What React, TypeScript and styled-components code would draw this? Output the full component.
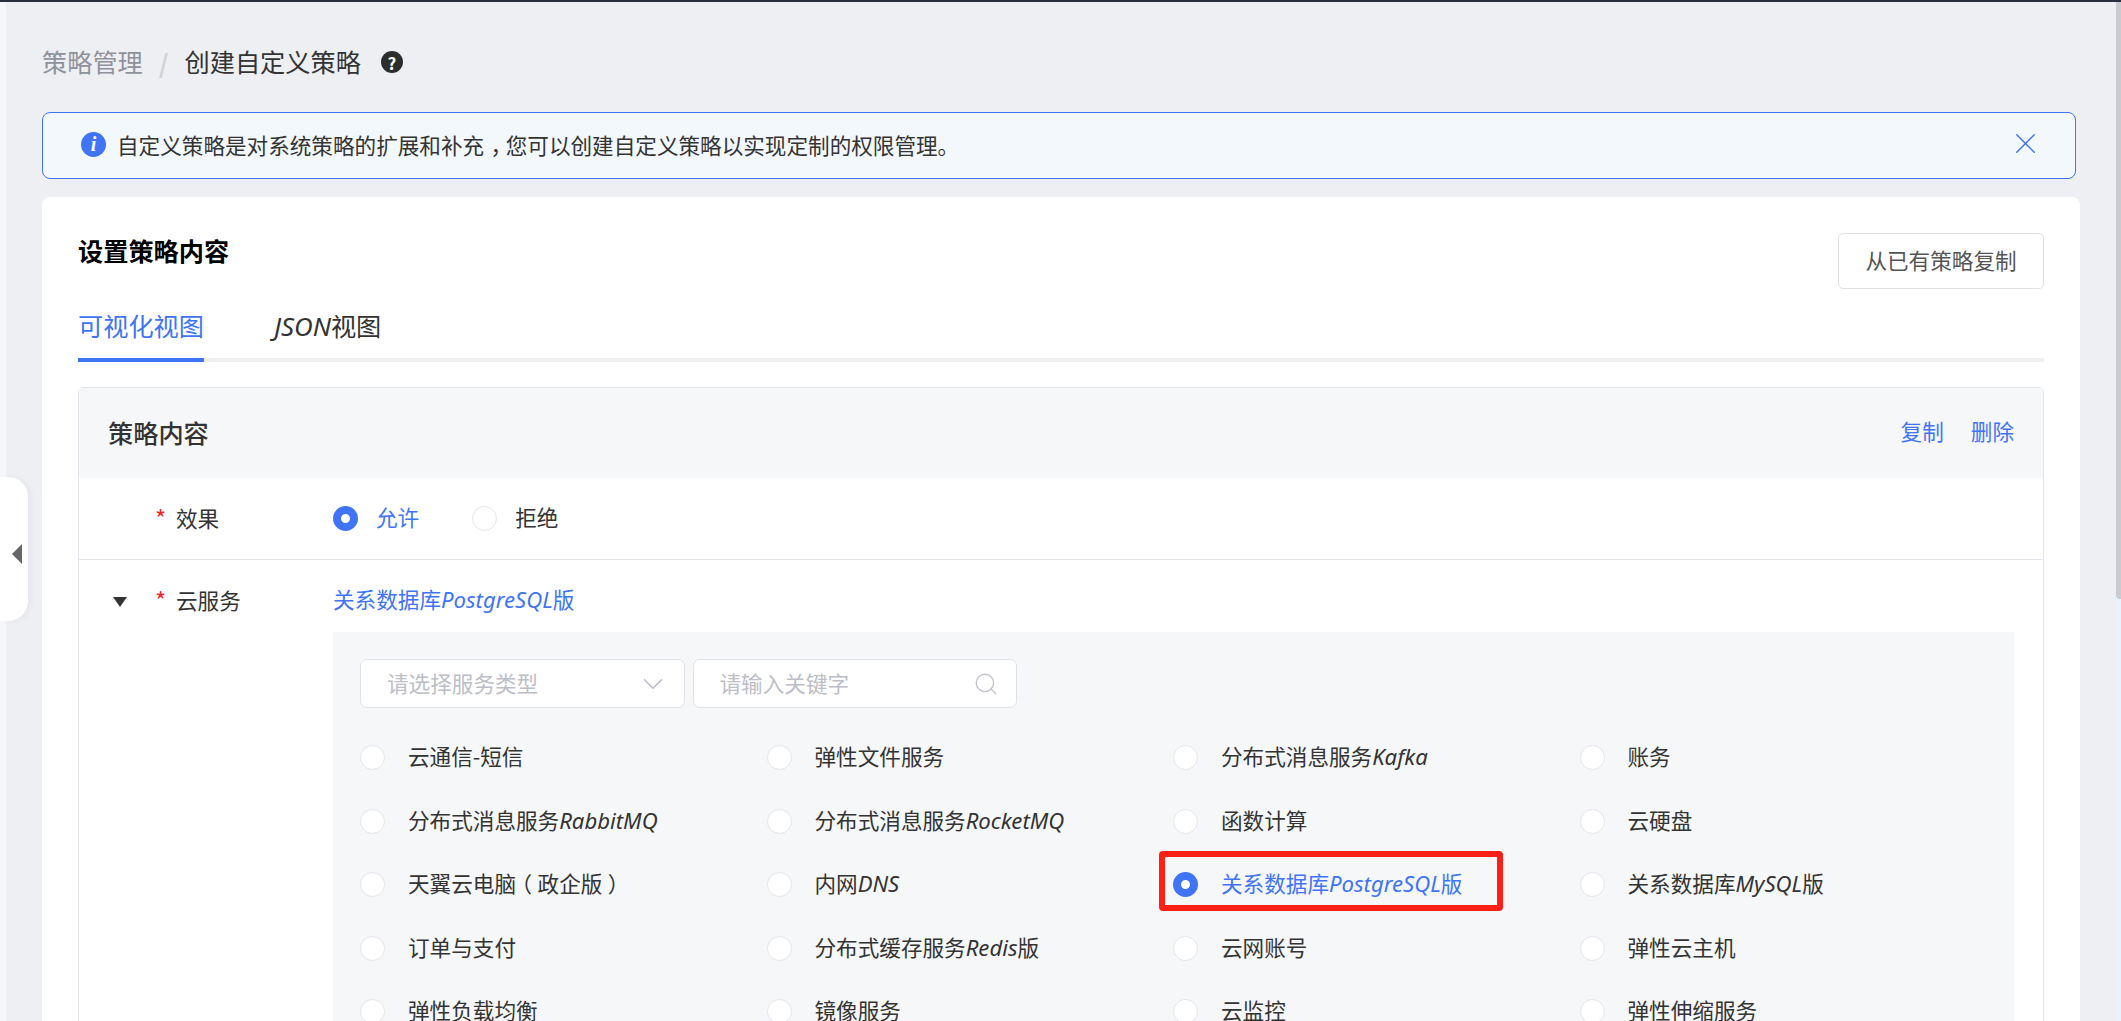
import React from "react";
import styled, { createGlobalStyle } from "styled-components";
import { ChevronDown, Search, X } from "lucide-react";

interface IOption {
  id: string;
  name: React.ReactNode;
  latin?: string;
  tail?: string;
}

const App: React.FC = () => {
  const renderOption = (option: IOption) => {
    const isChecked = option.id === "pg";
    return (
      <OptionCell key={option.id}>
        <Option>
          <Radio $checked={isChecked} />
          <OptionLabel $checked={isChecked}>
            {option.name}
            {option.latin && <Latin>{option.latin}</Latin>}
            {option.tail}
          </OptionLabel>
          {isChecked && <Highlight />}
        </Option>
      </OptionCell>
    );
  };

  return (
    <Page>
      <GlobalStyle />
      <TopBar />
      <Body>
        <LeftStrip>
          <CollapseHandle>
            <HandleArrow />
          </CollapseHandle>
        </LeftStrip>
        <Main>
          <Breadcrumb>
            <CrumbParent>策略管理</CrumbParent>
            <CrumbSlash>/</CrumbSlash>
            <CrumbCurrent>创建自定义策略</CrumbCurrent>
            <HelpIcon>?</HelpIcon>
          </Breadcrumb>
          <Alert>
            <InfoIcon>i</InfoIcon>
            <AlertText>
              自定义策略是对系统策略的扩展和补充<Punct $shift={0.3}>，</Punct>
              您可以创建自定义策略以实现定制的权限管理。
            </AlertText>
            <AlertClose>
              <X size={35} strokeWidth={1} />
            </AlertClose>
          </Alert>
          <Card>
            <CardHeader>
              <CardTitle>设置策略内容</CardTitle>
              <GhostButton>从已有策略复制</GhostButton>
            </CardHeader>
            <Tabs>
              <Tab $active>可视化视图</Tab>
              <Tab>
                <Latin>JSON</Latin>视图
              </Tab>
            </Tabs>
            <PolicyBox>
              <PolicyHeader>
                <PolicyTitle>策略内容</PolicyTitle>
                <PolicyActions>
                  <LinkText>复制</LinkText>
                  <LinkText>删除</LinkText>
                </PolicyActions>
              </PolicyHeader>
              <EffectRow>
                <EffectLabel>
                  <ArrowSlot />
                  <Required>*</Required>
                  效果
                </EffectLabel>
                <RadioGroup>
                  <RadioItem>
                    <Radio $checked />
                    <OptionLabel $checked>允许</OptionLabel>
                  </RadioItem>
                  <RadioItem>
                    <Radio />
                    <OptionLabel>拒绝</OptionLabel>
                  </RadioItem>
                </RadioGroup>
              </EffectRow>
              <ServiceRow>
                <FieldLabel>
                  <ArrowSlot>
                    <DownArrow />
                  </ArrowSlot>
                  <Required>*</Required>
                  云服务
                </FieldLabel>
                <ServiceContent>
                  <SelectedService>
                    关系数据库<Latin>PostgreSQL</Latin>版
                  </SelectedService>
                  <ServicePanel>
                    <Filters>
                      <FilterBox $paddingRight={14}>
                        <Placeholder>请选择服务类型</Placeholder>
                        <ChevronDown size={34} strokeWidth={0.9} color="#b3b6bf" />
                      </FilterBox>
                      <FilterBox $paddingRight={17}>
                        <Placeholder>请输入关键字</Placeholder>
                        <Search size={26} strokeWidth={1.2} color="#c0c3cb" />
                      </FilterBox>
                    </Filters>
                    <OptionsGrid>{OPTIONS.map(renderOption)}</OptionsGrid>
                  </ServicePanel>
                </ServiceContent>
              </ServiceRow>
            </PolicyBox>
          </Card>
        </Main>
        <ScrollTrack>
          <ScrollThumb />
        </ScrollTrack>
      </Body>
    </Page>
  );
};

export default App;

const GlobalStyle = createGlobalStyle`
  html, body {
    margin: 0;
    padding: 0;
    overflow: hidden;
  }

  body {
    font-family: "Noto Sans CJK SC", "Noto Sans", sans-serif;
    font-size: 21.6px;
    color: #333;
  }

  * {
    box-sizing: border-box;
  }
`;

const Page = styled.div`
  display: flex;
  flex-direction: column;
  width: 2121px;
  height: 1021px;
  overflow: hidden;
  background: #eeeff3;
`;

const TopBar = styled.div`
  flex: none;
  height: 2px;
  background: #2a2f3e;
`;

const Body = styled.div`
  flex: 1;
  display: flex;
  min-height: 0;
`;

const LeftStrip = styled.div`
  position: relative;
  flex: none;
  width: 6px;
  background: #f7f7f9;
`;

const CollapseHandle = styled.div`
  position: absolute;
  top: 475px;
  left: 0;
  width: 28px;
  height: 144px;
  display: flex;
  align-items: center;
  padding: 10px 0 0 12px;
  background: #fff;
  border-radius: 0 20px 20px 0;
  box-shadow: 2px 0 6px rgba(40, 50, 90, 0.05);
`;

const HandleArrow = styled.span`
  width: 0;
  height: 0;
  border-top: 10px solid transparent;
  border-bottom: 10px solid transparent;
  border-right: 10px solid #666;
`;

const Main = styled.div`
  flex: 1;
  min-width: 0;
  padding: 40px 36px 0 36px;
`;

const Breadcrumb = styled.div`
  display: flex;
  align-items: center;
  height: 40px;
  font-size: 25.2px;
`;

const CrumbParent = styled.span`
  padding-bottom: 2px;
  color: #8f929c;
`;

const CrumbSlash = styled.span`
  margin: 0 16px;
  color: #d0d1d6;
  font-weight: 700;
`;

const CrumbCurrent = styled.span`
  padding-bottom: 2px;
  color: #333;
`;

const HelpIcon = styled.span`
  display: flex;
  align-items: center;
  justify-content: center;
  width: 22px;
  height: 22px;
  margin-left: 20px;
  border-radius: 50%;
  background: #2d2d2d;
  color: #fff;
  font-size: 17px;
  font-weight: 700;
  line-height: 1;
`;

const Alert = styled.div`
  display: flex;
  align-items: center;
  height: 67px;
  margin: 30px 4px 18px 0;
  padding: 0 32px 0 38px;
  border: 1px solid #3f74f6;
  border-radius: 8px;
  background: #f3f8fd;
`;

const InfoIcon = styled.span`
  flex: none;
  display: flex;
  align-items: center;
  justify-content: center;
  width: 25px;
  height: 25px;
  margin: -3px 11px 0 0;
  border-radius: 50%;
  background: #3f74f6;
  color: #fff;
  font-family: "Liberation Serif", serif;
  font-size: 20px;
  font-style: italic;
  font-weight: 700;
  line-height: 1;
`;

const AlertText = styled.span`
  flex: 1;
  padding-bottom: 2px;
  color: #333;
`;

const Punct = styled.span<{ $shift: number }>`
  display: inline-block;
  transform: translateX(${(p) => p.$shift}em);
`;

const AlertClose = styled.span`
  display: flex;
  margin-top: -5px;
  color: #3f74f6;
`;

const Card = styled.div`
  padding: 36px;
  border-radius: 8px;
  background: #fff;
`;

const CardHeader = styled.div`
  display: flex;
  align-items: flex-start;
  justify-content: space-between;
`;

const CardTitle = styled.h2`
  margin: 0;
  color: #000;
  font-size: 25.2px;
  font-weight: 700;
  line-height: 34px;
`;

const GhostButton = styled.button`
  width: 206px;
  height: 56px;
  padding: 0 0 3px;
  border: 1px solid #dfe1e8;
  border-radius: 5px;
  background: #fff;
  color: #555;
  font: inherit;
`;

const Tabs = styled.div`
  display: flex;
  gap: 70px;
  margin-top: 20px;
  border-bottom: 4px solid #eeeff1;
`;

const Tab = styled.div<{ $active?: boolean }>`
  margin-bottom: -4px;
  padding-bottom: 16px;
  border-bottom: 4px solid ${(p) => (p.$active ? "#3f74f6" : "transparent")};
  color: ${(p) => (p.$active ? "#3f74f6" : "#333")};
  font-size: 25.2px;
  line-height: 32px;
`;

const Latin = styled.span`
  font-family: "Noto Sans", sans-serif;
  font-size: 1.025em;
  font-style: italic;
`;

const PolicyBox = styled.div`
  margin-top: 25px;
  border: 1px solid #e3e5ec;
  border-radius: 5px;
`;

const PolicyHeader = styled.div`
  display: flex;
  align-items: center;
  justify-content: space-between;
  height: 90px;
  padding: 0 29px;
  background: #f6f7f9;
`;

const PolicyTitle = styled.h3`
  margin: 0;
  padding-bottom: 2px;
  color: #333;
  font-size: 25.2px;
  font-weight: 500;
`;

const PolicyActions = styled.div`
  display: flex;
  gap: 27px;
  padding-bottom: 5px;
`;

const LinkText = styled.span`
  color: #3f74f6;
`;

const EffectRow = styled.div`
  display: grid;
  grid-template-columns: 254px 1fr;
  align-items: center;
  height: 82px;
  border-bottom: 1px solid #e3e5ec;
`;

const ServiceRow = styled.div`
  display: grid;
  grid-template-columns: 254px 1fr;
  padding: 23px 29px 0 0;
`;

const FieldLabel = styled.div`
  display: flex;
  align-items: center;
  align-self: start;
  height: 32px;
  padding-left: 34px;
  color: #333;
`;

const EffectLabel = styled(FieldLabel)`
  align-self: center;
  height: 35px;
  padding-bottom: 3px;
`;

const ArrowSlot = styled.span`
  display: flex;
  width: 42px;
`;

const DownArrow = styled.span`
  width: 0;
  height: 0;
  margin-top: 6px;
  border-left: 7.5px solid transparent;
  border-right: 7.5px solid transparent;
  border-top: 10px solid #333;
`;

const Required = styled.span`
  width: 21px;
  color: #f5222d;
  font-size: 24px;
`;

const RadioGroup = styled.div`
  display: flex;
  gap: 53px;
`;

const RadioItem = styled.div`
  display: flex;
  align-items: center;
  gap: 18px;
`;

const Radio = styled.span<{ $checked?: boolean }>`
  flex: none;
  width: 25px;
  height: 25px;
  border-radius: 50%;
  border: ${(p) => (p.$checked ? "8px solid #3f74f6" : "1px solid #e3e5ec")};
  background: #fff;
`;

const OptionLabel = styled.span<{ $checked?: boolean }>`
  padding-bottom: 3px;
  color: ${(p) => (p.$checked ? "#3f74f6" : "#333")};
  line-height: 32px;
  white-space: nowrap;
`;

const ServiceContent = styled.div`
  min-width: 0;
`;

const SelectedService = styled.div`
  height: 32px;
  margin-bottom: 17px;
  color: #3f74f6;
  line-height: 32px;
`;

const ServicePanel = styled.div`
  padding: 27px 28px 27px 27px;
  background: #f6f7f9;
`;

const Filters = styled.div`
  display: flex;
  gap: 8px;
`;

const FilterBox = styled.div<{ $paddingRight: number }>`
  display: flex;
  align-items: center;
  justify-content: space-between;
  width: 324.5px;
  height: 49px;
  padding: 0 ${(p) => p.$paddingRight}px 0 26px;
  border: 1px solid #e0e2e8;
  border-radius: 7px;
  background: #fff;
`;

const Placeholder = styled.span`
  padding-bottom: 2px;
  color: #bcbec7;
`;

const OptionsGrid = styled.div`
  display: grid;
  grid-template-columns: repeat(4, 1fr);
  grid-auto-rows: 63.5px;
  margin-top: 18px;
`;

const OptionCell = styled.div`
  display: flex;
  align-items: center;
`;

const Option = styled.div`
  position: relative;
  display: flex;
  align-items: center;
  gap: 23px;
`;

const Highlight = styled.span`
  position: absolute;
  top: -16px;
  right: -41px;
  bottom: -9px;
  left: -14px;
  border: 6px solid #ff2015;
  border-radius: 4px;
`;

const ScrollTrack = styled.div`
  flex: none;
  width: 5px;
  background: #eaf2fc;
`;

const ScrollThumb = styled.div`
  height: 597px;
  background: #c9cbd0;
  border-radius: 0 0 0 4px;
`;

const OPTIONS: IOption[] = [
  { id: "sms", name: "云通信-短信" },
  { id: "sfs", name: "弹性文件服务" },
  { id: "kafka", name: "分布式消息服务", latin: "Kafka" },
  { id: "billing", name: "账务" },
  { id: "rabbit", name: "分布式消息服务", latin: "RabbitMQ" },
  { id: "rocket", name: "分布式消息服务", latin: "RocketMQ" },
  { id: "faas", name: "函数计算" },
  { id: "disk", name: "云硬盘" },
  {
    id: "desktop",
    name: (
      <>
        天翼云电脑<Punct $shift={-0.25}>（</Punct>政企版<Punct $shift={0.25}>）</Punct>
      </>
    )
  },
  { id: "dns", name: "内网", latin: "DNS" },
  { id: "pg", name: "关系数据库", latin: "PostgreSQL", tail: "版" },
  { id: "mysql", name: "关系数据库", latin: "MySQL", tail: "版" },
  { id: "order", name: "订单与支付" },
  { id: "redis", name: "分布式缓存服务", latin: "Redis", tail: "版" },
  { id: "account", name: "云网账号" },
  { id: "ecs", name: "弹性云主机" },
  { id: "elb", name: "弹性负载均衡" },
  { id: "ims", name: "镜像服务" },
  { id: "monitor", name: "云监控" },
  { id: "as", name: "弹性伸缩服务" }
];
